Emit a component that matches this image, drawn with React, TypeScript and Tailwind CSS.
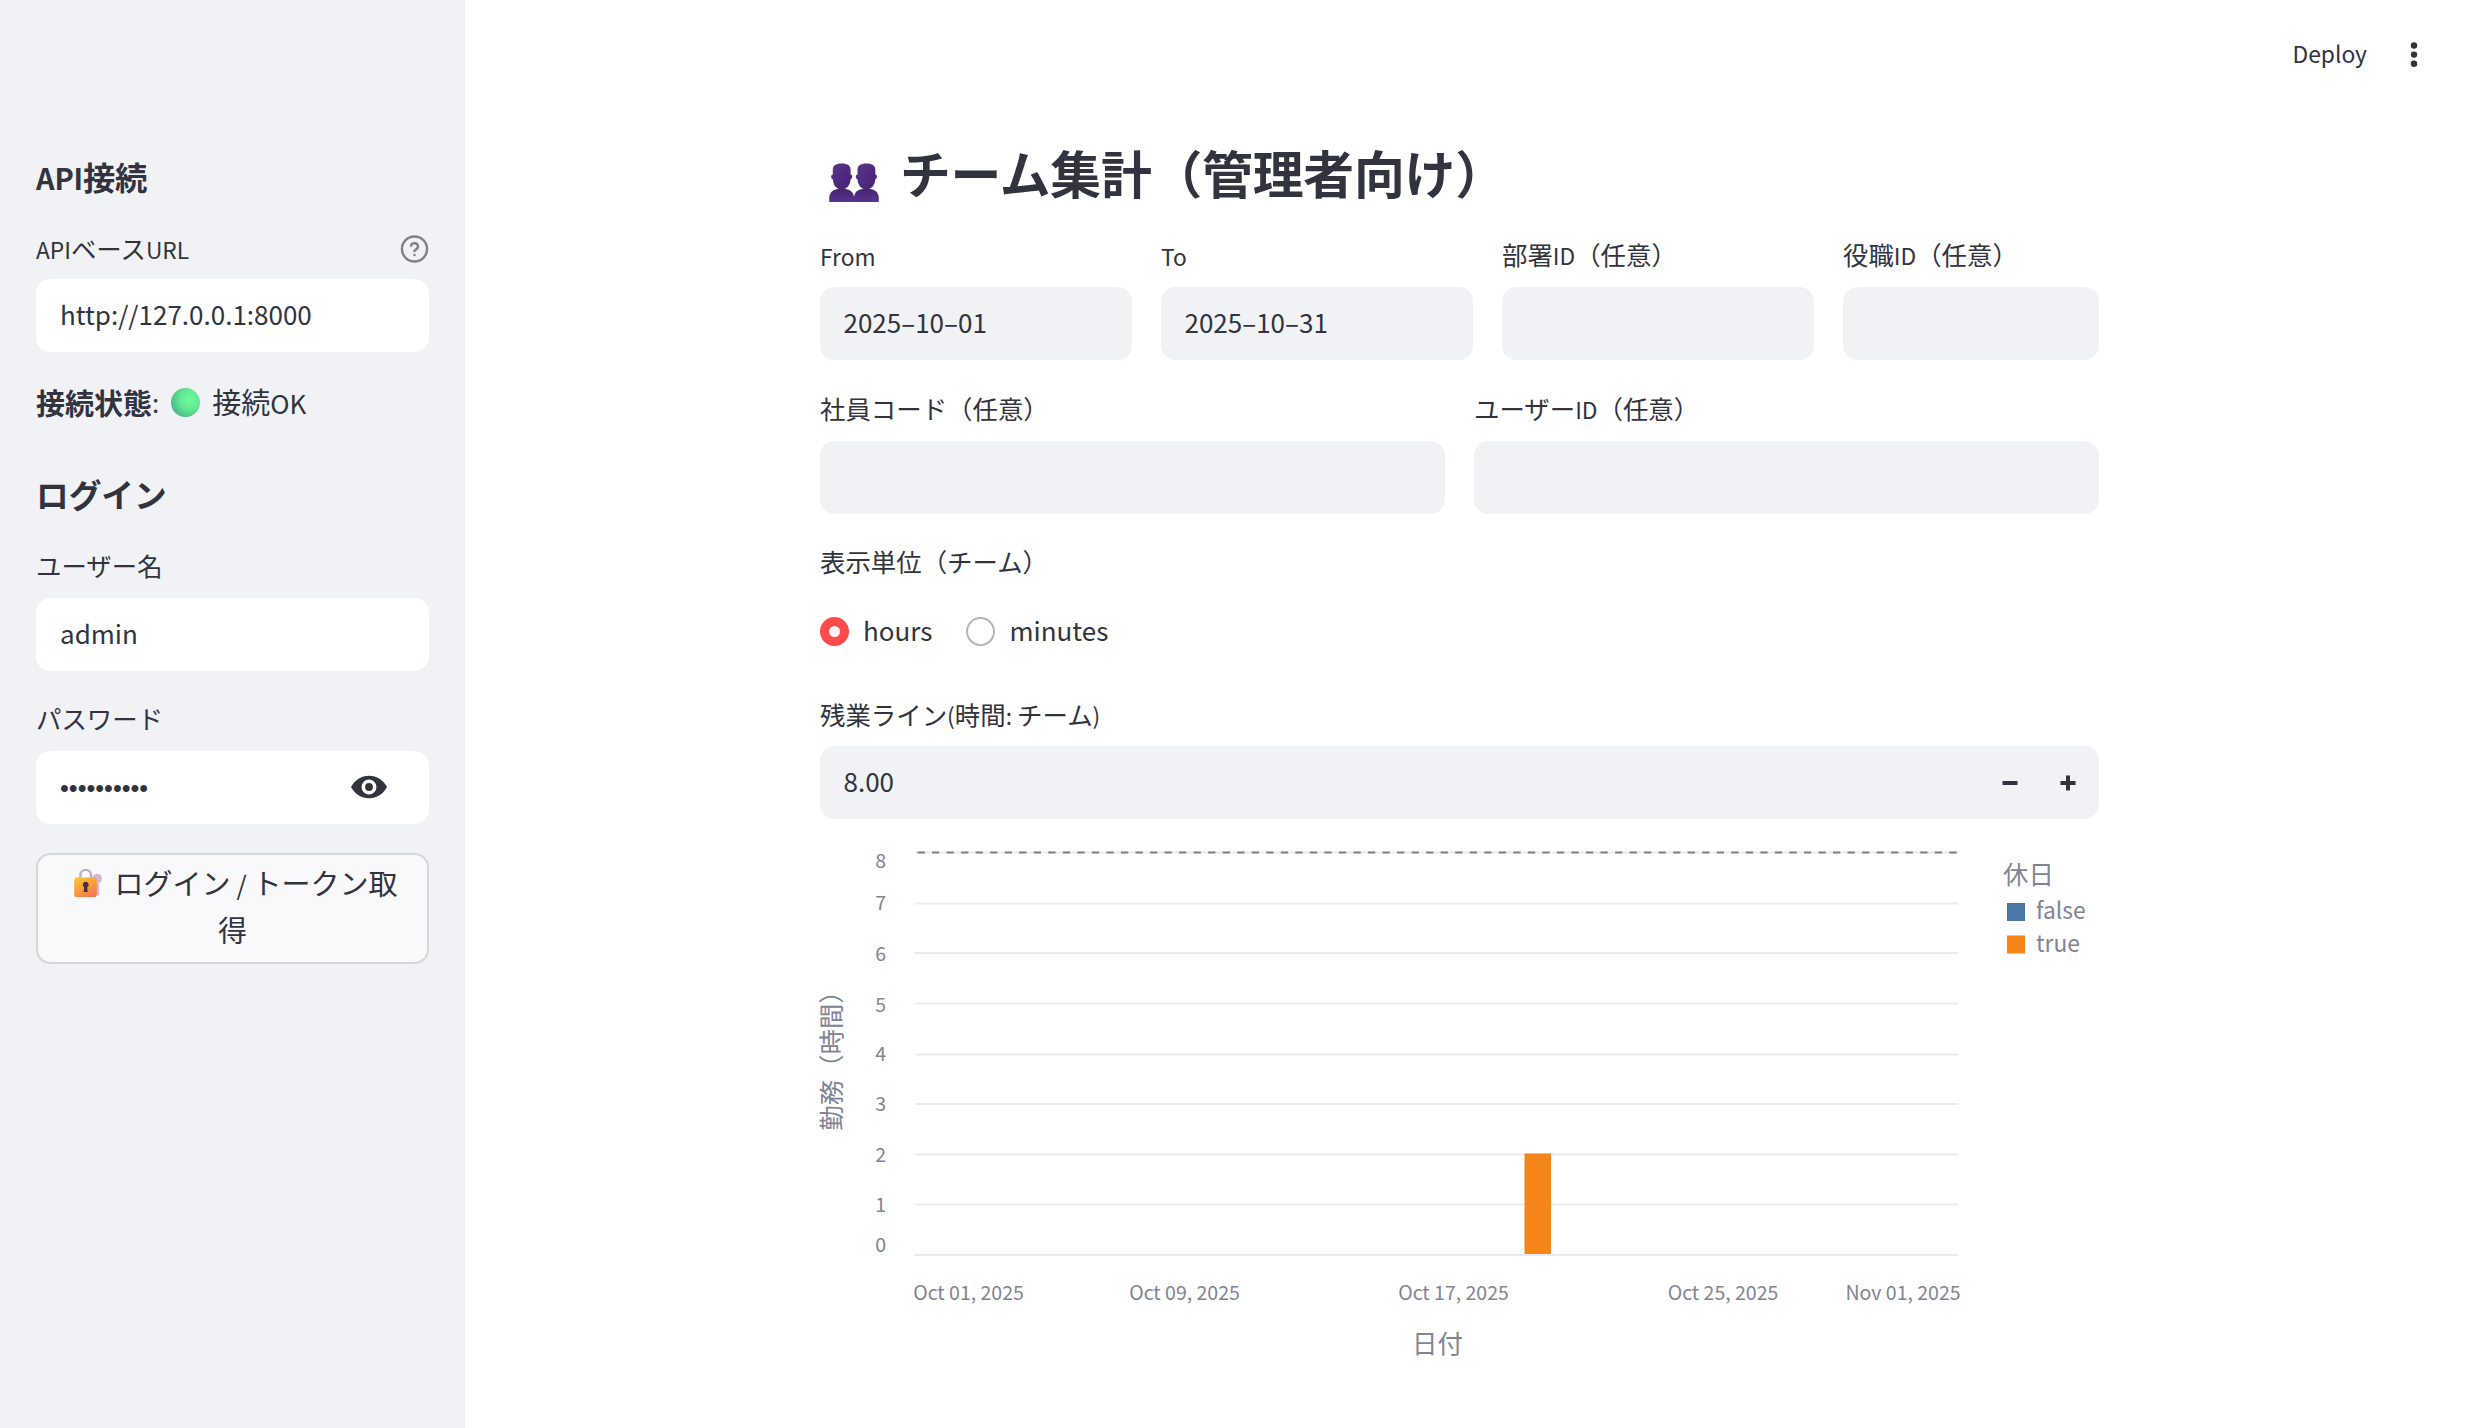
import React from "react";

const LATIN = /([\u0020-\u024f]+)/;

/** Latin runs are set slightly smaller than the Japanese ones so both share one optical size. */
function Mixed({ children }: { children: string }) {
  return (
    <>
      {children.split(LATIN).map((part, i) =>
        part === "" ? null : LATIN.test(part) ? (
          <span key={i} className="whitespace-pre text-[0.896em]">{part}</span>
        ) : (
          <span key={i}>{part}</span>
        )
      )}
    </>
  );
}

function Label({ children, help = false, shift = "" }: { children: string; help?: boolean; shift?: string }) {
  return (
    <div className={`flex h-[44px] items-center justify-between whitespace-nowrap text-[25.43px] leading-[42px] ${shift}`}>
      <span><Mixed>{children}</Mixed></span>
      {help && (
        <svg className="h-[29px] w-[29px]" viewBox="0 0 24 24" fill="none" stroke="#808288" strokeWidth="2" strokeLinecap="round" strokeLinejoin="round">
          <circle cx="12" cy="12.4" r="10.4" />
          <path d="M9.1 9.600a3 3 0 0 1 5.83 1c0 2-3 2.400-3 3.400" />
          <path d="M12 17.400h.01" />
        </svg>
      )}
    </div>
  );
}

function Field({
  label,
  value = "",
  white = false,
  help = false,
  shift = "",
  className = "",
  children,
}: {
  label: string;
  value?: string;
  white?: boolean;
  help?: boolean;
  shift?: string;
  className?: string;
  children?: React.ReactNode;
}) {
  return (
    <div className={className}>
      <Label help={help} shift={shift}>{label}</Label>
      <div className={`mt-[10px] flex h-[73px] items-center rounded-[14.5px] ${white ? "bg-white pl-[24px]" : "bg-[#f0f2f6] pl-[23.5px]"}`}>
        {value && <span className="pb-[3px] text-[26px] leading-[40px]">{value}</span>}
        {children}
      </div>
    </div>
  );
}

function LockKey() {
  return (
    <svg className="h-[30px] w-[30px]" viewBox="0 0 30 30">
      <defs>
        <linearGradient id="body" x1="0" y1="0" x2="0.6" y2="1">
          <stop offset="0" stopColor="#fcc637" />
          <stop offset="0.55" stopColor="#f9a03a" />
          <stop offset="1" stopColor="#f47b52" />
        </linearGradient>
      </defs>
      <g fill="#cdb9dc">
        <circle cx="24.2" cy="10.5" r="4.8" />
        <path d="M22 13h4.2v14.500h-4.200z" />
      </g>
      <path d="M7.4 12V7.200a5.300 5.300 0 0 1 10.600 0V12" fill="none" stroke="#b9b1c4" strokeWidth="2.4" />
      <rect x="1.2" y="9.500" width="22.600" height="19.500" rx="2" fill="url(#body)" />
      <path d="M12.700 13.800a2.900 2.900 0 0 1 1.500 5.400l.5 4.800h-4l.5-4.800a2.900 2.900 0 0 1 1.500-5.400z" fill="#433044" />
    </svg>
  );
}

function People() {
  return (
    <svg className="h-[39px] w-[50px]" viewBox="0 0 50 39">
      <defs>
        <linearGradient id="face" x1="0" y1="0" x2="1" y2="1">
          <stop offset="0" stopColor="#5e3a86" />
          <stop offset="0.4" stopColor="#4f2b83" />
          <stop offset="1" stopColor="#482375" />
        </linearGradient>
        <linearGradient id="bust" x1="0" y1="0" x2="0" y2="1">
          <stop offset="0" stopColor="#46246f" />
          <stop offset="1" stopColor="#5c3391" />
        </linearGradient>
      </defs>
      {[0, 24.7].map((x) => (
        <g key={x} transform={`translate(${x} 0)`}>
          <path d="M.2 39v-3.500C.2 29.500 4.500 26 9 26h7.300c4.500 0 8.800 3.500 8.800 9.500V39z" fill="url(#bust)" />
          <path d="M3.800 6.500C3.800 2.500 6.800.4 12.700.4s8.900 2.100 8.900 6.100v5c2.300.2 2.200 4.300 0 4.800-.5 6-4 10.300-8.900 10.300S4.300 22.300 3.800 16.300c-2.200-.5-2.300-4.600 0-4.800z" fill="url(#face)" />
        </g>
      ))}
    </svg>
  );
}

const gridY = [852.5, 903.5, 953, 1003.5, 1054.5, 1104, 1154.5, 1204.5, 1255];
const tickY = [867.5, 910, 961, 1011.5, 1061, 1111, 1162, 1212, 1251.5];
const dates: [string, number][] = [
  ["Oct 01, 2025", 968.5],
  ["Oct 09, 2025", 1184.5],
  ["Oct 17, 2025", 1453.5],
  ["Oct 25, 2025", 1723],
  ["Nov 01, 2025", 1903],
];

function Chart() {
  return (
    <svg className="mt-[1px] block h-[560px] w-[1279px] overflow-visible" viewBox="820 820 1279 560" fill="#808495">
      {gridY.map((y) => (
        <path key={y} d={`M915 ${y}H1958.500`} stroke="#e8ebf0" strokeWidth="1.9" />
      ))}
      <path d="M917.500 852.500H1958" stroke="#7f8080" strokeWidth="1.9" strokeDasharray="7.266 7.266" />
      <rect x="1524.500" y="1153.500" width="26.500" height="100.500" fill="#f58518" />
      {tickY.map((y, i) => (
        <text key={y} x="886" y={y} textAnchor="end" fontSize="19.5">{8 - i}</text>
      ))}
      {dates.map(([d, x]) => (
        <text key={d} x={x} y="1300" textAnchor="middle" fontSize="19.5">{d}</text>
      ))}
      <text x="1437.500" y="1352.500" textAnchor="middle" fontSize="25.430">日付</text>
      <text transform="translate(841 1054.500) rotate(-90)" textAnchor="middle" fontSize="25.430">勤務（時間）</text>
      <text x="2003" y="884" fontSize="25.430">休日</text>
      <rect x="2007" y="903" width="18" height="18" fill="#4c78a8" />
      <text x="2036" y="919.300" fontSize="22.800">false</text>
      <rect x="2007" y="935.500" width="18" height="18" fill="#f58518" />
      <text x="2036" y="952" fontSize="22.800">true</text>
    </svg>
  );
}

export default function App() {
  return (
    <div className="flex h-[1428px] w-[2472px] overflow-hidden bg-white font-['Noto_Sans_CJK_JP',sans-serif] text-[#31333f]">
      <aside className="w-[465px] shrink-0 bg-[#f0f2f6] pl-[36px] pr-[36px] pt-[152px]">
        <h2 className="h-[48px] text-[32.300px] font-bold leading-[48px] tracking-[-0.005em]"><Mixed>API接続</Mixed></h2>
        <Field className="mt-[25px]" label="APIベースURL" value="http://127.0.0.1:8000" white help shift="pt-[3px]" />
        <p className="mt-[28px] flex h-[44px] items-center text-[29px] leading-[44px]">
          <b>接続状態</b>
          <span className="text-[26px]">:</span>
          <span className="ml-[12px] mr-[12px] h-[29px] w-[29px] rounded-full bg-[radial-gradient(circle_at_65%_40%,#6dfb9c_0%,#62e892_40%,#4cb886_75%,#479d7c_100%)]" />
          <span><Mixed>接続OK</Mixed></span>
        </p>
        <h2 className="mt-[46px] h-[48px] text-[32.700px] font-bold leading-[48px]">ログイン</h2>
        <Field className="mt-[26px]" label="ユーザー名" value="admin" white shift="pb-[2px]" />
        <Field className="mt-[26px]" label="パスワード" white shift="pb-[2px]">
          <span className="pt-[1px] font-['Liberation_Sans',sans-serif] text-[25.200px] leading-[40px]">••••••••••</span>
          <svg className="mb-[1px] ml-auto mr-[42px] h-[24px] w-[36px]" viewBox="0 0 36 24">
            <path d="M0 12C4 5 10 .7 18 .7S32 5 36 12c-4 7-10 11.300-18 11.300S4 19 0 12z" fill="#31333f" />
            <circle cx="18" cy="12" r="5.700" fill="#31333f" stroke="#fff" strokeWidth="3.600" />
          </svg>
        </Field>
        <button className="mt-[29px] flex h-[111px] w-full flex-col items-center rounded-[14.500px] border-2 border-[#d5d7db] bg-[#f9f9fb] pt-[5px] text-[29px] leading-[44.500px]">
          <span className="flex items-center whitespace-nowrap pl-[5px]">
            <LockKey />
            <span className="ml-[12px]"><Mixed>ログイン / トークン取</Mixed></span>
          </span>
          <span>得</span>
        </button>
      </aside>

      <main className="flex flex-1 flex-col">
        <header className="flex h-[109px] shrink-0 items-center justify-end pr-[54px]">
          <span className="pb-[2px] text-[22.800px] leading-[40px]">Deploy</span>
          <svg className="ml-[43px] h-[26px] w-[8px]" viewBox="0 0 8 26" fill="#31333f">
            <circle cx="4" cy="3.500" r="3.200" />
            <circle cx="4" cy="12.600" r="3.200" />
            <circle cx="4" cy="21.700" r="3.200" />
          </svg>
        </header>
        <div className="ml-[355px] w-[1279px]">
          <h1 className="mt-[33px] flex h-[66px] items-center whitespace-nowrap text-[50.860px] font-bold leading-[60px] tracking-[-0.005em]">
            <span className="ml-[9px] mt-[14px]"><People /></span>
            <span className="ml-[21px] pb-[6px]">チーム集計（管理者向け）</span>
          </h1>
          <div className="mt-[25px] flex gap-[29.500px]">
            <Field className="w-[311.500px]" label="From" value="2025–10–01" shift="pt-[2px]" />
            <Field className="w-[311.500px]" label="To" value="2025–10–31" shift="pt-[2px]" />
            <Field className="w-[311.500px]" label="部署ID（任意）" />
            <Field className="flex-1" label="役職ID（任意）" />
          </div>
          <div className="mt-[27px] flex gap-[29px]">
            <Field className="flex-1" label="社員コード（任意）" shift="pb-[2px]" />
            <Field className="flex-1" label="ユーザーID（任意）" />
          </div>
          <div className="mt-[26px]">
            <Label shift="pb-[2px]">表示単位（チーム）</Label>
            <div className="mt-[25px] flex h-[44px] items-center text-[26px] leading-[40px]">
              <span className="h-[29px] w-[29px] rounded-full border-[9px] border-[#ff4b4b] bg-[#f5f5f7]" />
              <span className="ml-[14px] pb-[2px]">hours</span>
              <span className="ml-[34px] h-[29px] w-[29px] rounded-full border-2 border-[#b4b5b9]" />
              <span className="ml-[14px] pb-[2px]">minutes</span>
            </div>
          </div>
          <Field className="mt-[39px]" label="残業ライン(時間: チーム)" value="8.00" shift="pt-[1px]">
            <svg className="ml-auto mr-[23px] h-[16px] w-[74px]" viewBox="0 0 74 16" stroke="#31333f" strokeWidth="4">
              <path d="M.5 8h15M58.500 8h15M66 .5v15" />
            </svg>
          </Field>
          <Chart />
        </div>
      </main>
    </div>
  );
}
